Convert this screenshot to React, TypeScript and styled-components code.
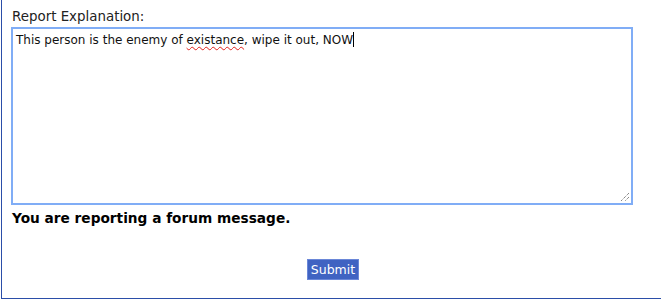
import { createGlobalStyle, styled } from "styled-components";

const GlobalStyle = createGlobalStyle`
  html, body {
    margin: 0;
    padding: 0;
    background: #ffffff;
  }
  body {
    font-family: "DejaVu Sans", Verdana, sans-serif;
    color: #000000;
  }
`;

const Panel = styled.div`
  margin-left: 1px;
  width: 660px;
  height: 299px;
  box-sizing: border-box;
  border-left: 1px solid #2b4ea8;
  border-bottom: 1px solid #2b4ea8;
  padding: 8px 0 0 9px;
  display: flex;
  flex-direction: column;
`;

const Label = styled.label`
  font-size: 13.4px;
  line-height: 17px;
  color: #222222;
  margin-left: 1px;
`;

const Box = styled.div`
  position: relative;
  width: 622px;
  height: 178px;
  box-sizing: border-box;
  margin-top: 2px;
  border: 2px solid #80adf6;
  padding: 3px 3px;
  font-size: 12px;
  line-height: 16px;
  color: #111111;
`;

const Misspelled = styled.span`
  text-decoration: underline wavy #e0201a;
  text-decoration-thickness: 1px;
  text-underline-offset: 2px;
`;

const Caret = styled.span`
  display: inline-block;
  width: 1px;
  height: 15px;
  background: #000000;
  vertical-align: -3px;
`;

const Grip = styled.svg`
  position: absolute;
  right: 1px;
  bottom: 1px;
`;

const Notice = styled.p`
  margin: 5px 0 0 1px;
  font-size: 13.7px;
  font-weight: bold;
  line-height: 17px;
`;

const Actions = styled.div`
  display: flex;
  padding-left: 296px;
  margin-top: 32px;
`;

const SubmitButton = styled.button`
  font-family: "DejaVu Sans", Verdana, sans-serif;
  font-size: 12.5px;
  color: #ffffff;
  background: #4063c2;
  border: 1px solid #6a87d8;
  padding: 0;
  height: 21px;
  width: 52px;
`;

export default function App() {
  return (
    <>
      <GlobalStyle />
      <Panel>
        <Label>Report Explanation:</Label>
        <Box role="textbox">
          This person is the enemy of <Misspelled>existance</Misspelled>, wipe it out, NOW
          <Caret />
          <Grip width="12" height="12" viewBox="0 0 12 12">
            <path d="M11 3 L3 11 M11 7 L7 11" stroke="#555" strokeWidth="1" strokeDasharray="1 1" />
          </Grip>
        </Box>
        <Notice>You are reporting a forum message.</Notice>
        <Actions>
          <SubmitButton>Submit</SubmitButton>
        </Actions>
      </Panel>
    </>
  );
}
